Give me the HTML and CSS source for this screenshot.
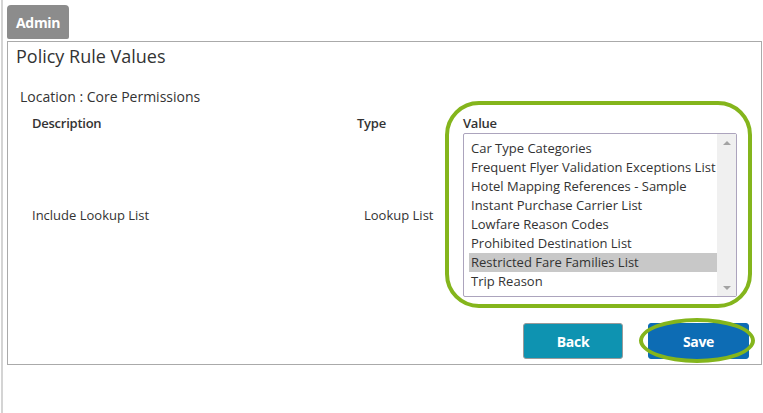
FILE: index.html
```html
<!DOCTYPE html>
<html>
<head>
<meta charset="utf-8">
<link rel="stylesheet" href="styles.css">
</head>
<body>
<div class="page">
  <div class="tab">Admin</div>
  <div class="panel">
    <h1 class="title">Policy Rule Values</h1>
    <div class="location">Location : Core Permissions</div>
    <div class="grid">
      <div class="head c-desc">Description</div>
      <div class="head c-type">Type</div>
      <div class="head c-val">Value</div>
      <div class="cell c-desc">Include Lookup List</div>
      <div class="cell c-type">Lookup List</div>
      <div class="c-val">
        <div class="listbox">
          <div class="options">
            <div class="opt">Car Type Categories</div>
            <div class="opt">Frequent Flyer Validation Exceptions List</div>
            <div class="opt">Hotel Mapping References - Sample</div>
            <div class="opt">Instant Purchase Carrier List</div>
            <div class="opt">Lowfare Reason Codes</div>
            <div class="opt">Prohibited Destination List</div>
            <div class="opt sel">Restricted Fare Families List</div>
            <div class="opt">Trip Reason</div>
          </div>
          <div class="scrollbar">
            <span class="arrow up"></span>
            <span class="arrow down"></span>
          </div>
        </div>
      </div>
    </div>
    <div class="actions">
      <button class="btn back">Back</button>
      <button class="btn save">Save</button>
    </div>
    <div class="hl-box"></div>
    <div class="hl-ellipse"></div>
  </div>
</div>
</body>
</html>
```
FILE: styles.css
```css
html, body {
  margin: 0;
  padding: 0;
  background: #fff;
}
body {
  font-family: "Open Sans", "Liberation Sans", sans-serif;
  color: #333;
  font-size: 13px;
}
.page {
  margin-left: 1px;
  border-left: 2px solid #d4d4d4;
  min-height: 413px;
  padding: 5px 1px 0 4px;
  box-sizing: border-box;
}
.tab {
  display: inline-flex;
  align-items: center;
  height: 34px;
  width: 62px;
  box-sizing: border-box;
  padding-left: 9px;
  background: #8c8c8c;
  color: #fff;
  font-weight: 700;
  font-size: 14px;
  border-radius: 4px 4px 2px 2px;
  letter-spacing: -0.3px;
}
.panel {
  position: relative;
  margin-top: 2px;
  border: 1px solid #aaa;
  height: 324px;
  box-sizing: border-box;
  padding: 0 12px 0 8px;
  display: flex;
  flex-direction: column;
}
.title {
  margin: 2px 0 0 0;
  font-size: 18px;
  font-weight: 400;
  line-height: 24px;
  color: #333;
}
.location {
  margin: 19px 0 0 4px;
  font-size: 14px;
  line-height: 20px;
}
.grid {
  display: grid;
  grid-template-columns: 325px 106px 274px;
  align-items: center;
  margin: 7px 0 0 16px;
}
.head {
  font-weight: 600;
  font-size: 13px;
  line-height: 18px;
  margin-bottom: 1px;
  letter-spacing: -0.25px;
}
.cell {
  font-size: 13px;
}
.cell.c-type {
  padding-left: 7px;
}
.listbox {
  display: flex;
  border: 1px solid #aca4bd;
  border-radius: 2px;
  height: 164px;
  box-sizing: border-box;
}
.options {
  flex: 1;
  padding: 5px 0 0 5px;
}
.opt {
  height: 19px;
  line-height: 19px;
  padding-left: 2px;
  font-size: 13px;
  white-space: nowrap;
  color: #333;
}
.opt.sel {
  background: #c8c8c8;
}
.scrollbar {
  width: 19px;
  background: #f0f0f0;
  display: flex;
  flex-direction: column;
  justify-content: space-between;
  align-items: center;
  padding: 7px 0 6px;
}
.arrow {
  width: 0;
  height: 0;
  border-left: 4px solid transparent;
  border-right: 4px solid transparent;
}
.arrow.up {
  border-bottom: 4px solid #a3a3a3;
}
.arrow.down {
  border-top: 4px solid #a3a3a3;
}
.actions {
  margin-top: auto;
  margin-bottom: 5px;
  display: flex;
  justify-content: flex-end;
  gap: 25px;
}
.btn {
  width: 101px;
  height: 36px;
  border-radius: 3px;
  color: #fff;
  font-family: "Open Sans", "Liberation Sans", sans-serif;
  font-weight: 700;
  font-size: 14px;
  letter-spacing: -0.3px;
  cursor: pointer;
}
.btn.back {
  width: 100px;
  background: #0e93b1;
  border: 1px solid #9a9a9a;
}
.btn.save {
  background: #0d6cb4;
  border: 1px solid #0d6cb4;
}
.hl-box {
  position: absolute;
  left: 437px;
  top: 59px;
  width: 307px;
  height: 207px;
  box-sizing: border-box;
  border: 4px solid #84b51c;
  border-radius: 34px;
}
.hl-ellipse {
  position: absolute;
  left: 631px;
  top: 276px;
  width: 116px;
  height: 45px;
  box-sizing: border-box;
  border: 4px solid #84b51c;
  border-radius: 50%;
}
```
